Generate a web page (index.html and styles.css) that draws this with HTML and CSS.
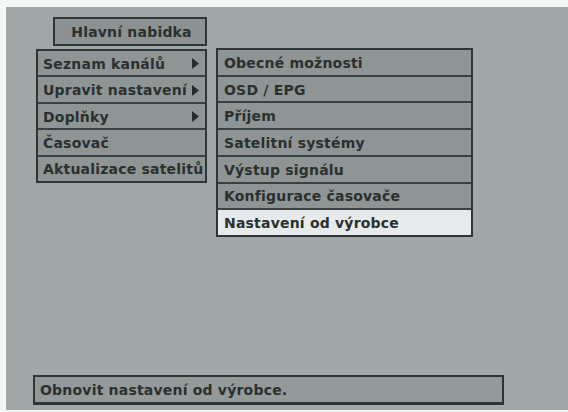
FILE: index.html
```html
<!DOCTYPE html>
<html lang="cs">
<head>
<meta charset="utf-8">
<title>Hlavní nabidka</title>
<link rel="stylesheet" href="styles.css">
</head>
<body>
<div class="screen">
  <div class="title">Hlavní nabidka</div>
  <div class="menus">
    <div class="menu menu-main">
      <div class="item"><span>Seznam kanálů</span><svg class="arrow" width="7" height="11" viewBox="0 0 7 11"><polygon points="0,0 7,5.5 0,11"/></svg></div>
      <div class="item"><span>Upravit nastavení</span><svg class="arrow" width="7" height="11" viewBox="0 0 7 11"><polygon points="0,0 7,5.5 0,11"/></svg></div>
      <div class="item"><span>Doplňky</span><svg class="arrow" width="7" height="11" viewBox="0 0 7 11"><polygon points="0,0 7,5.5 0,11"/></svg></div>
      <div class="item"><span>Časovač</span></div>
      <div class="item"><span>Aktualizace satelitů</span></div>
    </div>
    <div class="menu menu-sub">
      <div class="item"><span>Obecné možnosti</span></div>
      <div class="item"><span>OSD / EPG</span></div>
      <div class="item"><span>Příjem</span></div>
      <div class="item"><span>Satelitní systémy</span></div>
      <div class="item"><span>Výstup signálu</span></div>
      <div class="item"><span>Konfigurace časovače</span></div>
      <div class="item selected"><span>Nastavení od výrobce</span></div>
    </div>
  </div>
  <div class="status">Obnovit nastavení od výrobce.</div>
</div>
</body>
</html>
```

FILE: styles.css
```css
html, body {
  margin: 0;
  padding: 0;
  background: #f4f6f6;
}
body {
  width: 568px;
  height: 412px;
  overflow: hidden;
  font-family: "DejaVu Sans", "Liberation Sans", sans-serif;
  font-weight: bold;
  font-size: 14px;
  letter-spacing: 0.2px;
  color: #2a2f2f;
}
.screen {
  margin: 7px 0 0 6px;
  width: 562px;
  height: 403px;
  background: #a1a8a7;
  box-sizing: border-box;
  padding: 10px 0 0 30px;
  display: flex;
  flex-direction: column;
}
.title {
  margin-left: 17px;
  width: 154px;
  height: 29px;
  box-sizing: border-box;
  border: 2px solid #2f3434;
  background: #8b9291;
  display: flex;
  align-items: center;
  justify-content: center;
  padding-left: 3px;
}
.menus {
  margin-top: 2px;
  display: flex;
  align-items: flex-start;
  gap: 9px;
}
.menu {
  box-sizing: border-box;
  border: 2px solid #2f3434;
  background: #3a3f3f;
  display: flex;
  flex-direction: column;
  gap: 2px;
}
.menu-main {
  width: 171px;
  height: 134px;
  margin-top: 1px;
}
.menu-sub {
  width: 257px;
  height: 189px;
}
.item {
  flex: 1;
  background: #8e9594;
  display: flex;
  align-items: center;
  justify-content: space-between;
  padding: 1px 6px 0 5px;
  white-space: nowrap;
}
.menu-sub .item {
  padding-left: 6px;
}
.item.selected {
  background: #e6eaea;
}
.arrow {
  fill: #262b2b;
  flex: none;
}
.status {
  margin-top: 138px;
  margin-left: -3px;
  width: 471px;
  height: 30px;
  box-sizing: border-box;
  border: 2px solid #2f3434;
  border-bottom-width: 3px;
  background: #939a99;
  display: flex;
  align-items: center;
  padding-left: 5px;
}
```
